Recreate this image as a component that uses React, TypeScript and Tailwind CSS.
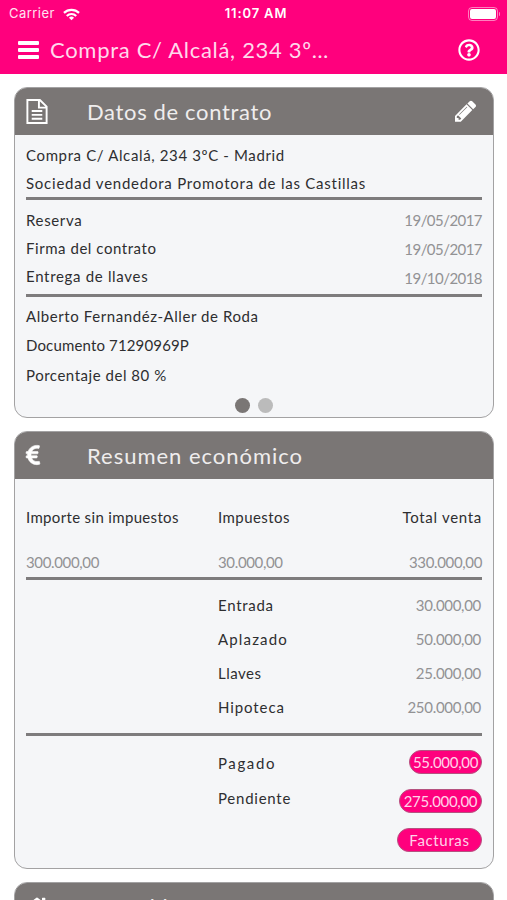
import React from 'react';
import { FaEuroSign, FaHome, FaRegQuestionCircle } from 'react-icons/fa';

const importes = [
  { label: 'Importe sin impuestos', value: '300.000,00', className: 'w-[192px]', labelClass: 'tracking-[0.34px]' },
  { label: 'Impuestos', value: '30.000,00', className: 'flex-1', labelClass: 'tracking-[0.45px]' },
  { label: 'Total venta', value: '330.000,00', className: 'text-right', labelClass: 'tracking-[0.7px]' },
];

const pagos = [
  { label: 'Entrada', value: '30.000,00', labelClass: 'tracking-[0.72px]' },
  { label: 'Aplazado', value: '50.000,00', labelClass: 'tracking-[1.15px]' },
  { label: 'Llaves', value: '25.000,00', labelClass: 'tracking-[0.5px]' },
  { label: 'Hipoteca', value: '250.000,00', labelClass: 'tracking-[0.9px]' },
];

function StatusBar() {
  return (
    <div className="flex h-7 items-center pl-[9px] pr-[7px] font-['Inter',sans-serif] text-[13px]">
      <div className="flex flex-1 items-center gap-2 text-[#ffe3f1]">
        <span className="tracking-[0.45px]">Carrier</span>
        <svg viewBox="0 0 18 13" className="h-[13px] w-[17px]" fill="none" stroke="white" strokeWidth="2.3">
          <path d="M1 4.8a11.4 11.4 0 0 1 16 0" />
          <path d="M4 8a7.2 7.2 0 0 1 10 0" />
          <path d="M9 12.6 6.3 9.9a3.9 3.9 0 0 1 5.4 0z" fill="white" stroke="none" />
        </svg>
      </div>
      <span className="mr-[-3px] font-semibold tracking-[0.85px]">11:07 AM</span>
      <div className="flex flex-1 items-center justify-end gap-px">
        <div className="h-[14px] w-[30px] rounded-[4px] border border-white/50 p-px">
          <div className="h-full w-full rounded-[2px] bg-white" />
        </div>
        <div className="h-1 w-[1.5px] rounded-r bg-white/50" />
      </div>
    </div>
  );
}

function PencilIcon() {
  return (
    <svg viewBox="0 0 1515 1536" className="mb-0.5 h-[22px] w-[21px]" fill="currentColor">
      <path d="M363 1408l91-91-235-235-91 91v107h128v128h107zM886 480q0-22-22-22-10 0-17 7l-542 542q-7 7-7 17 0 22 22 22 10 0 17-7l542-542q7-7 7-17zM832 288l416 416-832 832H0v-416zm683 96q0 53-37 90l-166 166-416-416 166-165q36-38 90-38 53 0 91 38l235 234q37 39 37 91z" />
    </svg>
  );
}

function CardHeader({ icon, title, action }: { icon: React.ReactNode; title: React.ReactNode; action?: React.ReactNode }) {
  return (
    <div className="flex h-[47px] items-center bg-[#7a7675] pl-[11px] pr-[17px] text-white">
      <div className="w-[61px]">{icon}</div>
      <h2 className="flex-1 text-[22px] text-[#efeded]">{title}</h2>
      {action}
    </div>
  );
}

function Card({ children, className }: { children: React.ReactNode; className: string }) {
  return (
    <section className={`overflow-hidden rounded-[13px] border border-[#a3a2a3] bg-[#f5f6f8] ${className}`}>
      {children}
    </section>
  );
}

export default function App() {
  return (
    <div className="h-[900px] w-full overflow-hidden bg-white font-['Lato',sans-serif] text-[15px] text-[#2e2e30]">
      <header className="h-[74px] bg-[#ff007d] text-white">
        <StatusBar />
        <div className="flex h-[43px] items-center pl-[18px] pr-[27px]">
          <svg viewBox="0 0 21 18" className="h-[18px] w-[21px]" fill="currentColor">
            <rect width="21" height="4" rx="1" />
            <rect y="7" width="21" height="4" rx="1" />
            <rect y="14" width="21" height="4" rx="1" />
          </svg>
          <h1 className="ml-[11px] flex-1 text-[22px] tracking-[0.7px] text-[#ffd9ec]">Compra C/ Alcalá, 234 3º…</h1>
          <FaRegQuestionCircle className="size-[22px]" />
        </div>
      </header>

      <main className="space-y-[13px] pt-[13px] pr-[13px] pl-[14px]">
        {/* Contrato */}
        <Card className="h-[331px]">
          <CardHeader
            icon={
              <svg viewBox="0 0 22 26" className="mb-px h-[25px] w-[22px]" fill="none" stroke="currentColor" strokeWidth="2">
                <path d="M1 1h13l7 7v17H1zM13 1v8h8M5.5 12.5h11M5.5 16.5h11M5.5 20.5h11" />
              </svg>
            }
            title={<span className="tracking-[0.65px]">Datos de contrato</span>}
            action={<PencilIcon />}
          />
          <div className="px-[11px] pt-1.5 leading-7">
            <p className="tracking-[0.63px]">Compra C/ Alcalá, 234 3ºC - Madrid</p>
            <p className="tracking-[0.76px]">Sociedad vendedora Promotora de las Castillas</p>
            <div className="h-[3px] bg-[#7e7c7d]" />
            <div className="flex justify-between pt-1.5">
              <div>
                <p className="tracking-[0.65px]">Reserva</p>
                <p className="tracking-[0.55px]">Firma del contrato</p>
                <p className="tracking-[0.68px]">Entrega de llaves</p>
              </div>
              <div className="text-right leading-[29px] tracking-[-0.55px] text-[#929294]">
                <p>19/05/2017</p>
                <p>19/05/2017</p>
                <p>19/10/2018</p>
              </div>
            </div>
            <div className="mt-px h-[3px] bg-[#7e7c7d]" />
            <div className="pt-[5px] leading-[29.3px]">
              <p className="tracking-[0.58px]">Alberto Fernandéz-Aller de Roda</p>
              <p className="tracking-[0.15px]">Documento 71290969P</p>
              <p className="tracking-[0.53px]">Porcentaje del 80 %</p>
            </div>
            <div className="flex justify-center gap-2 pt-2">
              <span className="size-[15px] rounded-full bg-[#7a7675]" />
              <span className="size-[15px] rounded-full bg-[#bbbbbb]" />
            </div>
          </div>
        </Card>

        {/* Resumen económico */}
        <Card className="h-[438px]">
          <CardHeader
            icon={<FaEuroSign className="-ml-1 mb-0.5 size-[22px] stroke-current stroke-[14]" />}
            title={<span className="tracking-[0.98px]">Resumen económico</span>}
          />
          <div className="px-[11px] pt-6">
            <div className="flex leading-7">
              {importes.map((item) => (
                <div key={item.label} className={item.className}>
                  <p className={item.labelClass}>{item.label}</p>
                  <p className="mt-[17px] tracking-[-0.35px] text-[#929294]">{item.value}</p>
                </div>
              ))}
            </div>
            <div className="mt-px h-[3px] bg-[#7e7c7d]" />
            <div className="pt-2 pb-[9px] pl-[192px] leading-[34px]">
              {pagos.map((pago) => (
                <div key={pago.label} className="flex justify-between">
                  <span className={pago.labelClass}>{pago.label}</span>
                  <span className="pr-px tracking-[-0.3px] text-[#929294]">{pago.value}</span>
                </div>
              ))}
            </div>
            <div className="h-[3px] bg-[#7e7c7d]" />
            <div className="flex justify-between pl-[192px]">
              <div className="pt-2.5 leading-[34.5px]">
                <p className="tracking-[1.6px]">Pagado</p>
                <p className="tracking-[0.75px]">Pendiente</p>
              </div>
              <div className="flex flex-col items-end gap-[15px] pt-[14px] text-center leading-[22px] tracking-[-0.3px] text-[#ffd3e9]">
                <span className="h-6 w-[73px] rounded-full border border-[#b5527f] bg-[#ff007d]">55.000,00</span>
                <span className="h-6 w-[83px] rounded-full border border-[#b5527f] bg-[#ff007d]">275.000,00</span>
                <button className="h-6 w-[85px] rounded-full border border-[#b5527f] bg-[#ff007d] tracking-[0.65px]">Facturas</button>
              </div>
            </div>
          </div>
        </Card>

        {/* Inmueble */}
        <Card className="h-[200px]">
          <CardHeader icon={<FaHome className="-ml-px size-6" />} title={<span className="tracking-[0.5px]">Inmueble</span>} />
        </Card>
      </main>
    </div>
  );
}
